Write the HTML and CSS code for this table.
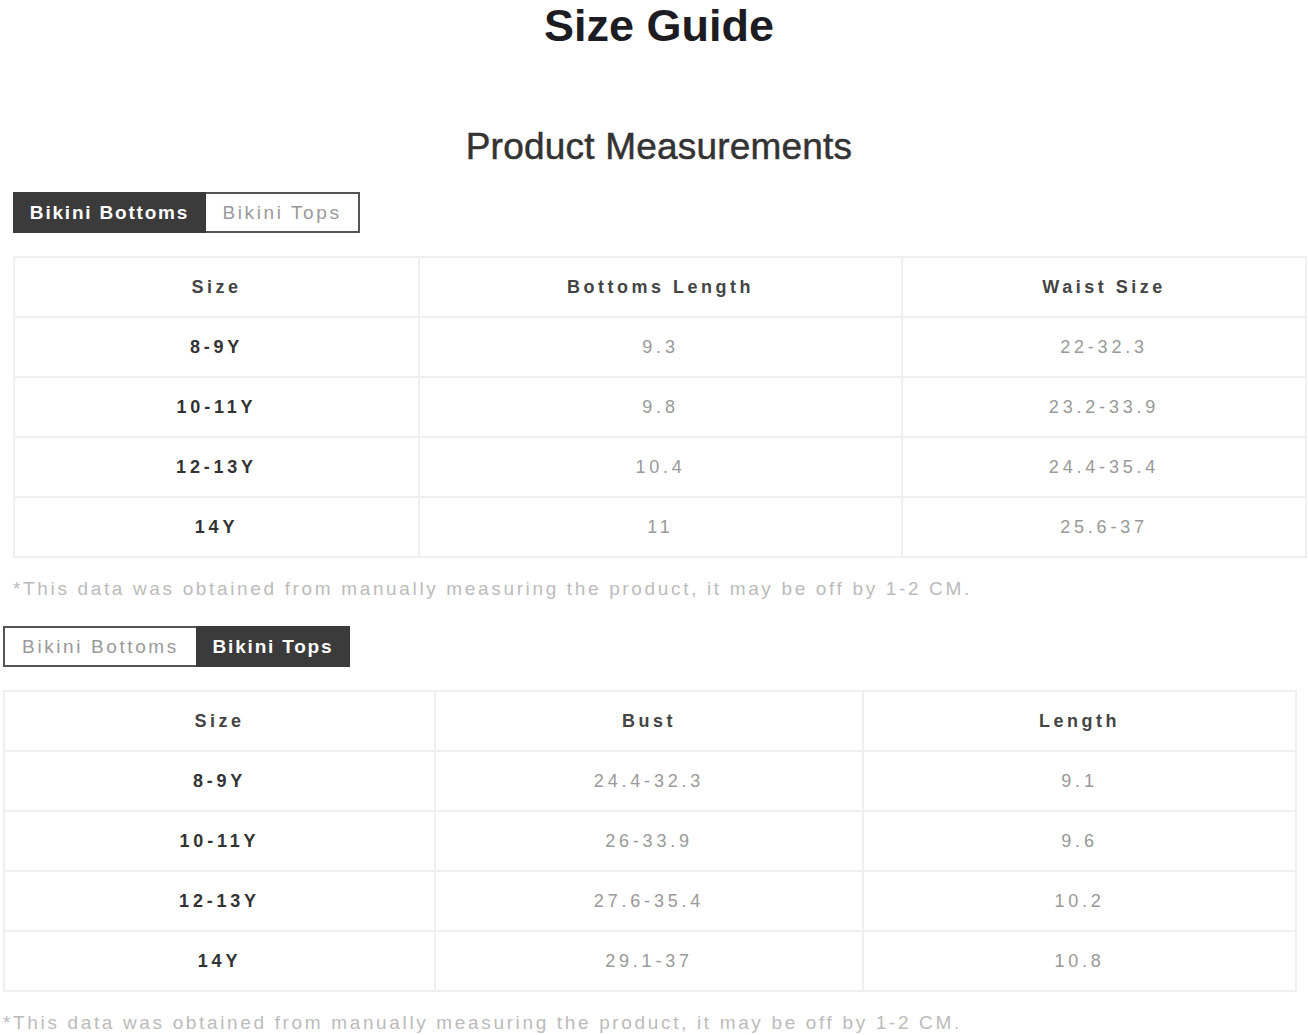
FILE: index.html
```html
<!DOCTYPE html>
<html>
<head>
<meta charset="utf-8">
<link rel="stylesheet" href="styles.css">
</head>
<body>
<h1 class="title">Size Guide</h1>
<h2 class="subtitle">Product Measurements</h2>

<section class="block block-a">
  <div class="tabs">
    <span class="tab active">Bikini Bottoms</span>
    <span class="tab">Bikini Tops</span>
  </div>
  <table class="sizes bottoms">
    <colgroup><col class="c1"><col class="c2"><col class="c3"></colgroup>
    <tr><th>Size</th><th>Bottoms Length</th><th>Waist Size</th></tr>
    <tr><td class="sz">8-9Y</td><td>9.3</td><td>22-32.3</td></tr>
    <tr><td class="sz">10-11Y</td><td>9.8</td><td>23.2-33.9</td></tr>
    <tr><td class="sz">12-13Y</td><td>10.4</td><td>24.4-35.4</td></tr>
    <tr><td class="sz">14Y</td><td>11</td><td>25.6-37</td></tr>
  </table>
  <p class="note">*This data was obtained from manually measuring the product, it may be off by 1-2 CM.</p>
</section>

<section class="block block-b">
  <div class="tabs">
    <span class="tab">Bikini Bottoms</span>
    <span class="tab active">Bikini Tops</span>
  </div>
  <table class="sizes tops">
    <colgroup><col class="c1"><col class="c2"><col class="c3"></colgroup>
    <tr><th>Size</th><th>Bust</th><th>Length</th></tr>
    <tr><td class="sz">8-9Y</td><td>24.4-32.3</td><td>9.1</td></tr>
    <tr><td class="sz">10-11Y</td><td>26-33.9</td><td>9.6</td></tr>
    <tr><td class="sz">12-13Y</td><td>27.6-35.4</td><td>10.2</td></tr>
    <tr><td class="sz">14Y</td><td>29.1-37</td><td>10.8</td></tr>
  </table>
  <p class="note">*This data was obtained from manually measuring the product, it may be off by 1-2 CM.</p>
</section>
</body>
</html>
```
FILE: styles.css
```css
html, body {
  margin: 0;
  padding: 0;
  background: #fff;
}
body {
  font-family: "Liberation Sans", Arial, sans-serif;
  width: 1308px;
  overflow: hidden;
}
.title {
  margin: 0;
  text-align: center;
  font-size: 45px;
  line-height: 51px;
  font-weight: bold;
  color: #1c1c22;
  height: 51px;
  padding-left: 10px;
}
.subtitle {
  margin: 77px 0 0;
  text-align: center;
  font-size: 37px;
  line-height: 38px;
  font-weight: normal;
  color: #333;
  -webkit-text-stroke: 0.5px #333;
  letter-spacing: 0.2px;
  padding-left: 10px;
}
.block-a {
  padding-left: 13px;
  margin-top: 26px;
}
.block-b {
  padding-left: 3px;
  margin-top: 26px;
}
.tabs {
  display: flex;
  height: 41px;
}
.tab {
  box-sizing: border-box;
  height: 41px;
  display: flex;
  align-items: center;
  justify-content: center;
  font-size: 19px;
  letter-spacing: 2.6px;
  color: #999;
  background: #fff;
  border: 2px solid #555;
}
.block-a .tab:first-child { width: 193px; }
.block-a .tab:last-child { width: 154px; border-left: none; }
.block-b .tab:first-child { width: 193px; border-right: none; }
.block-b .tab:last-child { width: 154px; }
.tab.active {
  background: #3b3b3b;
  border-color: #3b3b3b;
  color: #fff;
  font-weight: bold;
  letter-spacing: 1.8px;
}
.sizes {
  margin-top: 23px;
  width: 1292px;
  border-collapse: collapse;
  table-layout: fixed;
}
.bottoms .c1 { width: 405px; }
.bottoms .c2 { width: 483px; }
.bottoms .c3 { width: 404px; }
.tops .c1 { width: 431px; }
.tops .c2 { width: 428px; }
.tops .c3 { width: 433px; }
.sizes th, .sizes td {
  height: 60px;
  box-sizing: border-box;
  padding: 0;
  border: 2px solid #efefef;
  text-align: center;
  vertical-align: middle;
  font-size: 18px;
  letter-spacing: 3.8px;
}
.sizes th {
  color: #444;
  font-weight: bold;
  letter-spacing: 3.5px;
}
.sizes td {
  color: #999;
  font-weight: normal;
}
.sizes td.sz {
  color: #333;
  font-weight: bold;
}
.note {
  margin: 20px 0 0;
  font-size: 19px;
  line-height: 22px;
  color: #bbb;
  letter-spacing: 2.65px;
}
```
